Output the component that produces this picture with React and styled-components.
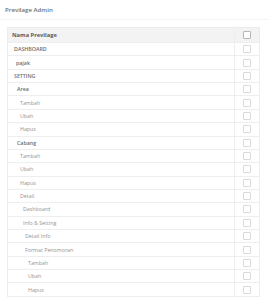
import React from 'react';
import styled, { createGlobalStyle } from 'styled-components';

const GlobalStyle = createGlobalStyle`
  html, body {
    margin: 0;
    padding: 0;
    background: #fff;
    font-family: "Open Sans", "Liberation Sans", sans-serif;
  }
`;

const Card = styled.div`
  width: 268px;
  height: 300px;
  overflow: hidden;
  background: #fff;
`;

const CardHeader = styled.div`
  height: 20px;
  padding: 0 5px;
  display: flex;
  align-items: center;
  font-size: 6.1px;
  font-weight: 600;
  color: #707070;
  border-bottom: 1px solid #f3f3f3;
  box-sizing: border-box;
`;

const Body = styled.div`
  padding: 7px 8px 0 7px;
`;

const Table = styled.div`
  border: 1px solid #ececec;
  border-bottom: none;
`;

const Row = styled.div`
  display: grid;
  grid-template-columns: 1fr 25px;
  height: ${p => (p.head ? '15px' : '13.37px')};
  background: ${p => (p.head ? '#f3f3f3' : '#fff')};
  border-bottom: 1px solid #eeeeee;
  box-sizing: border-box;
`;

const Name = styled.div`
  display: flex;
  align-items: center;
  padding-left: ${p => p.indent}px;
  font-size: ${p => (p.head ? '5.7px' : '5.3px')};
  font-weight: ${p => (p.head ? 700 : p.bold ? 600 : 400)};
  color: ${p => (p.head ? '#5a5a5a' : p.bold ? '#6e6e6e' : '#949494')};
  white-space: nowrap;
`;

const CheckCell = styled.div`
  display: flex;
  align-items: center;
  justify-content: center;
  border-left: 1px solid #eeeeee;
`;

const Box = styled.span`
  width: 6px;
  height: 6px;
  border: 1px solid ${p => (p.head ? '#b5b5b5' : '#dadada')};
  border-radius: 1px;
  background: #fff;
`;

const rows = [
  { label: 'DASHBOARD', indent: 6, bold: true },
  { label: 'pajak', indent: 8, bold: true },
  { label: 'SETTING', indent: 6, bold: true },
  { label: 'Area', indent: 9, bold: true },
  { label: 'Tambah', indent: 12 },
  { label: 'Ubah', indent: 12 },
  { label: 'Hapus', indent: 12 },
  { label: 'Cabang', indent: 9, bold: true },
  { label: 'Tambah', indent: 12 },
  { label: 'Ubah', indent: 12 },
  { label: 'Hapus', indent: 12 },
  { label: 'Detail', indent: 12 },
  { label: 'Dashboard', indent: 15 },
  { label: 'Info & Setting', indent: 15 },
  { label: 'Detail Info', indent: 17 },
  { label: 'Format Penomoran', indent: 17 },
  { label: 'Tambah', indent: 20 },
  { label: 'Ubah', indent: 20 },
  { label: 'Hapus', indent: 20 },
];

export default function App() {
  return (
    <Card>
      <GlobalStyle />
      <CardHeader>Previlage Admin</CardHeader>
      <Body>
        <Table>
          <Row head>
            <Name head indent={4}>Nama Previlage</Name>
            <CheckCell><Box head /></CheckCell>
          </Row>
          {rows.map((r, i) => (
            <Row key={i}>
              <Name indent={r.indent} bold={r.bold}>{r.label}</Name>
              <CheckCell><Box /></CheckCell>
            </Row>
          ))}
        </Table>
      </Body>
    </Card>
  );
}
